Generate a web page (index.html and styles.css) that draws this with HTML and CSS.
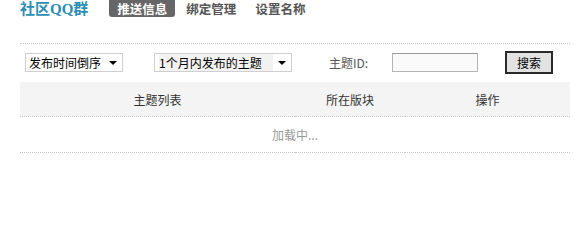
FILE: index.html
```html
<!DOCTYPE html>
<html lang="zh-CN">
<head>
<meta charset="utf-8">
<title>社区QQ群</title>
<link rel="stylesheet" href="styles.css">
</head>
<body>
<div class="page">
  <div class="nav">
    <div class="title">社区QQ群</div>
    <ul class="tabs">
      <li class="tab active">推送信息</li>
      <li class="tab">绑定管理</li>
      <li class="tab">设置名称</li>
    </ul>
  </div>
  <div class="filters">
    <div class="select sel-order"><span class="sel-text">发布时间倒序</span><span class="caret"></span></div>
    <div class="select sel-range"><span class="sel-text hl">1个月内发布的主题</span><span class="caret"></span></div>
    <label class="field-label">主题ID:</label>
    <input class="field-input" type="text">
    <button class="btn">搜索</button>
  </div>
  <table class="list">
    <thead>
      <tr><th class="c1">主题列表</th><th class="c2">所在版块</th><th class="c3">操作</th></tr>
    </thead>
    <tbody>
      <tr><td colspan="3" class="loading">加载中...</td></tr>
    </tbody>
  </table>
</div>
</body>
</html>
```
FILE: styles.css
```css
html, body {
  margin: 0;
  padding: 0;
  background: #fff;
}
body {
  font-family: "Noto Sans CJK SC", "Noto Sans", sans-serif;
  font-size: 12px;
  color: #333;
}
.page {
  width: 550px;
  padding-left: 20px;
}
.nav {
  display: flex;
  align-items: flex-start;
  height: 43px;
  border-bottom: 1px dotted #c8c8c8;
}
.title {
  font-family: "Liberation Serif", "Noto Sans CJK SC", serif;
  font-weight: bold;
  font-size: 15px;
  line-height: 18px;
  color: #2b8db3;
  margin-right: 21px;
  white-space: nowrap;
}
.tabs {
  display: flex;
  list-style: none;
  margin: 0;
  padding: 0;
}
.tab {
  padding: 0 8px;
  margin-right: 2px;
  font-weight: bold;
  font-size: 12.5px;
  line-height: 17px;
  height: 17px;
  color: #555;
  white-space: nowrap;
}
.tab.active {
  background: #666;
  color: #fff;
  border-radius: 0 0 3px 3px;
}
.tab + .tab {
  margin-left: 1px;
}
.filters {
  display: flex;
  align-items: center;
  margin-top: 7px;
  height: 23px;
}
.select {
  box-sizing: border-box;
  height: 19px;
  border: 1px solid #cfcfcf;
  display: flex;
  align-items: center;
  justify-content: space-between;
  color: #000;
  line-height: 17px;
  background: #fff;
}
.sel-order {
  width: 98px;
  margin-left: 5px;
  padding: 0 5px 0 3px;
}
.sel-range {
  width: 138px;
  margin-left: 31px;
  padding: 0 5px 0 4px;
}
.sel-text.hl {
  background: #f2f2f2;
  width: 114px;
}
.caret {
  width: 0;
  height: 0;
  border-left: 4px solid transparent;
  border-right: 4px solid transparent;
  border-top: 4px solid #000;
}
.field-label {
  margin-left: 37px;
  width: 63px;
  color: #555;
}
.field-input {
  box-sizing: border-box;
  width: 86px;
  height: 19px;
  margin: 0;
  padding: 0 3px;
  border: 1px solid #b5b5b5;
  border-top-color: #999;
  background: #fafafa;
  font: inherit;
}
.btn {
  box-sizing: border-box;
  width: 48px;
  height: 23px;
  margin: 0 0 0 27px;
  padding: 0;
  border: 2px solid #2a2a2a;
  background: #e2e2e2;
  font-family: inherit;
  font-size: 12px;
  color: #000;
}
.list {
  width: 550px;
  margin-top: 8px;
  border-collapse: collapse;
}
.list th {
  height: 34px;
  padding: 0;
  background: #f4f4f4;
  font-weight: normal;
  color: #333;
  text-align: center;
  border-bottom: 1px dotted #c8c8c8;
}
.c1 { width: 50%; }
.c2 { width: 20%; }
.c3 { width: 30%; }
.loading {
  height: 35px;
  padding: 0;
  text-align: center;
  color: #999;
  border-bottom: 1px dotted #c8c8c8;
}
```
